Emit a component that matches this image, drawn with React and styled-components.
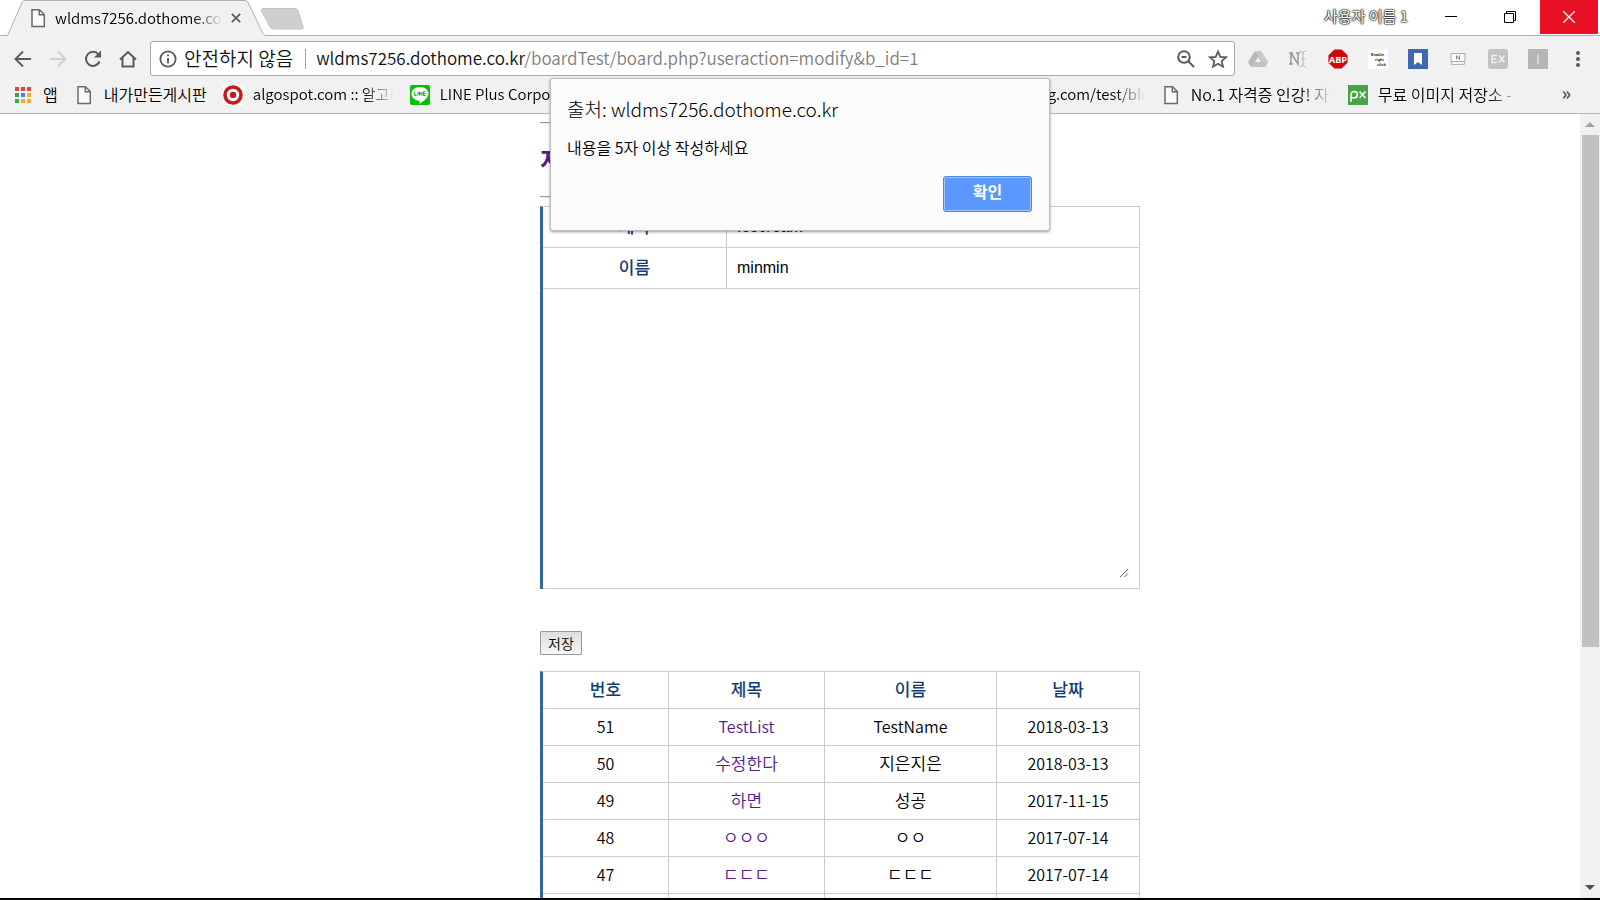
import React from 'react';
import styled, { createGlobalStyle, css } from 'styled-components';

const uiFont = '"Noto Sans CJK KR", "Noto Sans", sans-serif';

const GlobalStyle = createGlobalStyle`
  * { box-sizing: border-box; }
  body { margin: 0; background: #fff; color: #000; font: 16px/24px ${uiFont}; overflow: hidden; }
  button, input, textarea { font: inherit; margin: 0; }
  a { color: inherit; text-decoration: none; }
`;

const Browser = styled.div`
  display: flex;
  flex-direction: column;
  height: 100vh;
  border-bottom: 2px solid #000;
  overflow: hidden;
  font-weight: 350;
`;

const Chrome = styled.header`
  position: relative;
  flex: none;
  background: #f1f1f1;
  border-bottom: 1px solid #b5b5b5;
`;

const TabStrip = styled.div`
  display: flex;
  height: 36px;
  background: #fff;
  border-bottom: 1px solid #b0b0b0;
`;

const Tab = styled.div`
  position: relative;
  z-index: 0;
  display: flex;
  align-items: center;
  width: 260px;
  height: 36px;
  margin-left: 6px;
  padding: 0 24px 0 22px;
  gap: 7px;
`;

const TabShape = styled.svg`
  position: absolute;
  inset: 0;
  z-index: -1;
`;

const fade = css`
  overflow: hidden;
  white-space: nowrap;
  mask-image: linear-gradient(to right, #000 calc(100% - 30px), transparent);
`;

const TabTitle = styled.span`
  flex: 1;
  font-size: 15px;
  line-height: 20px;
  ${fade}
`;

const IconButton = styled.button`
  display: flex;
  align-items: center;
  justify-content: center;
  flex: none;
  width: ${(p) => p.$w || 20}px;
  height: ${(p) => p.$h || 20}px;
  padding: 0;
  border: 0;
  background: ${(p) => p.$bg || 'transparent'};
  color: ${(p) => p.$color || '#5a5a5a'};
`;

const NewTab = styled.button`
  padding: 0;
  border: 0;
  background: none;
  height: 38px;
  margin-left: -6px;
  display: flex;
  align-items: center;
`;

const WindowControls = styled.div`
  display: flex;
  align-items: flex-start;
  margin-left: auto;
  padding-right: 2px;
`;

const Profile = styled.button`
  height: 32px;
  padding: 0 14px;
  border: 0;
  background: none;
  color: #fff;
  font-size: 15px;
  font-weight: 400;
  text-shadow: 0 0 2px #000, 0 0 2px #000, 0 0 1px #000;
`;

const Toolbar = styled.div`
  display: flex;
  align-items: center;
  height: 45px;
  padding: 5px 12px 5px 13px;
`;

const NavButtons = styled.div`
  display: flex;
  gap: 15px;
  padding-right: 12px;
`;

const AddressBar = styled.div`
  display: flex;
  flex: 1;
  align-items: center;
  height: 35px;
  padding: 0 6px 0 7px;
  border: 1px solid #a9a9a9;
  border-radius: 3px;
  background: #fff;
`;

const Security = styled.button`
  display: flex;
  align-items: center;
  gap: 7px;
  height: 20px;
  padding: 0 12px 0 1px;
  border: 0;
  border-right: 1px solid #a0a0a0;
  background: none;
  color: #111;
  font-size: 19px;
  line-height: 20px;
`;

const SecurityLabel = styled.span`
  padding-bottom: 2px;
`;

const Url = styled.div`
  flex: 1;
  padding: 0 0 2px 10px;
  font-size: 17px;
  color: #808080;
  white-space: nowrap;
`;

const Host = styled.span`
  color: #111;
`;

const AddressActions = styled.div`
  display: flex;
  gap: 12px;
`;

const Extensions = styled.div`
  display: flex;
  gap: 20px;
  padding-left: 13px;
`;

const Bookmarks = styled.nav`
  display: flex;
  align-items: center;
  height: 32px;
  padding: 0 29px 5px 13px;
  gap: 16px;
`;

const Bookmark = styled.a`
  display: flex;
  flex: none;
  align-items: center;
  gap: 10px;
  height: 26px;
  font-size: ${(p) => (p.$korean ? 16 : 15)}px;
`;

const BookmarkText = styled.span`
  padding-bottom: 2px;
  ${(p) => p.$clip && css`width: 141px; ${fade}`}
`;

const BookmarkGap = styled.div`
  flex: none;
  width: 361px;
`;

const More = styled.button`
  margin-left: auto;
  padding: 0 0 6px;
  border: 0;
  background: none;
  color: #5a5a5a;
  font-size: 18px;
  font-weight: 700;
`;

const Dialog = styled.section`
  position: absolute;
  z-index: 2;
  top: 78px;
  left: 50%;
  width: 500px;
  height: 153px;
  margin-left: -250px;
  padding: 17px 17px 17px 16px;
  display: flex;
  flex-direction: column;
  border: 1px solid #bdbdbd;
  border-radius: 3px;
  background: #fbfbfb;
  box-shadow: 0 1px 3px rgba(0, 0, 0, 0.4);
`;

const DialogTitle = styled.h2`
  margin: 0 0 13px;
  font-size: 19px;
  line-height: 26px;
  font-weight: 300;
`;

const DialogText = styled.p`
  margin: 0;
  font-size: 16px;
  line-height: 24px;
`;

const OkButton = styled.button`
  align-self: flex-end;
  width: 89px;
  height: 36px;
  margin-top: 17px;
  padding: 0 0 6px;
  border: 1px solid #4a85e8;
  border-radius: 3px;
  box-shadow: inset 0 0 0 1px #a5c5ff;
  background: #5a97ff;
  color: #fff;
  font-size: 16px;
  font-weight: 700;
`;

const Viewport = styled.div`
  display: flex;
  flex: 1;
  min-height: 0;
`;

const Page = styled.main`
  flex: 1;
  overflow: hidden;
`;

const Board = styled.div`
  width: 700px;
  margin: 0 auto;
  padding: 8px 0 0 100px;
`;

const Rule = styled.hr`
  width: 500px;
  height: 2px;
  margin: 0;
  border: 0;
  border-top: 1px solid #9a9a9a;
  border-bottom: 1px solid #eee;
`;

const BoardTitle = styled.h2`
  margin: 18px 0 20px;
  font-size: 24px;
  line-height: 34px;
  font-weight: 700;
  color: #551a8b;
`;

const Table = styled.table`
  width: 100%;
  table-layout: fixed;
  border-collapse: separate;
  border-spacing: 0;
  border-top: 1px solid #ccc;
  border-left: 3px solid #369;
`;

const EditTable = styled(Table)`
  margin-top: 8px;
`;

const cell = css`
  height: ${(p) => p.$h}px;
  padding: 0 0 2px;
  border-right: 1px solid #ccc;
  border-bottom: 1px solid #ccc;
  text-align: center;
`;

const Th = styled.th`
  ${cell}
  width: ${(p) => p.$w}px;
  color: #153d73;
  font-weight: 500;
  font-size: 17px;
`;

const Td = styled.td`
  ${cell}
  font-size: ${(p) => (p.$korean ? 17 : 16)}px;
`;

const FieldCell = styled(Td)`
  padding: 0;
`;

const PostLink = styled.a`
  color: #551a8b;
`;

const Field = styled.input`
  display: block;
  width: 100%;
  height: 38px;
  padding: 0 10px;
  border: 0;
  outline: 0;
  background: transparent;
  font-family: "Liberation Sans", Arial, sans-serif;
`;

const BodyArea = styled.div`
  position: relative;
`;

const BodyField = styled.textarea`
  display: block;
  width: 100%;
  height: 299px;
  padding: 9px;
  border: 0;
  outline: 0;
  resize: none;
`;

const Grip = styled.svg`
  position: absolute;
  right: 10px;
  bottom: 10px;
`;

const SaveRow = styled.div`
  padding: 42px 0 16px;
`;

const SaveButton = styled.button`
  display: block;
  width: 42px;
  height: 24px;
  padding: 0;
  border: 1px solid #999;
  border-radius: 1px;
  background: linear-gradient(#dedede, #f6f6f6);
  font-size: 14px;
  line-height: 20px;
`;

const Scrollbar = styled.div`
  display: flex;
  flex-direction: column;
  align-items: center;
  flex: none;
  width: 20px;
  background: #f1f1f1;
`;

const ScrollArrow = styled(IconButton)`
  height: 21px;
`;

const Track = styled.div`
  flex: 1;
  width: 17px;
`;

const Thumb = styled.div`
  height: 69%;
  background: #c1c1c1;
`;

const DocIcon = () => (
  <svg width="20" height="20" viewBox="0 0 20 20" fill="none" stroke="#6a6a6a" strokeWidth="1.5">
    <path d="M4 1.7h7.5l4.8 4.8v12H4z" fill="#fafafa" />
    <path d="M11.3 1.7v5h5" />
  </svg>
);

const AppsIcon = () => (
  <svg width="20" height="20" viewBox="0 0 20 20">
    {['#e2453c', '#e2453c', '#e2453c', '#35a853', '#3f86f4', '#f0b02a', '#35a853', '#f0b02a', '#f0b02a'].map((c, i) => (
      <rect key={i} x={2 + (i % 3) * 6} y={2 + Math.floor(i / 3) * 6} width="4" height="4" fill={c} />
    ))}
  </svg>
);

const TargetIcon = () => (
  <svg width="20" height="20" viewBox="0 0 20 20">
    <rect width="20" height="20" fill="#fff" />
    <circle cx="10" cy="10" r="8" fill="#fff" stroke="#c41a20" strokeWidth="3.6" />
    <circle cx="10" cy="10" r="3.2" fill="#c41a20" />
  </svg>
);

const LineIcon = () => (
  <svg width="20" height="20" viewBox="0 0 20 20">
    <rect width="20" height="20" rx="2" fill="#00c300" />
    <path d="M10 2c4.800 0 8.500 2.800 8.500 6.700 0 3.800-4.500 6.800-8.300 9.800-.6.400-.7-.2-.6-1.100l.1-1.600C5 15.600 1.500 12.600 1.500 8.700 1.500 4.800 5.200 2 10 2z" fill="#fff" />
    <path d="M4.700 6.800v3.700h2M8 6.800v3.700M9.500 10.500V6.800l2.400 3.700V6.800M15.500 6.800h-2v3.700h2M13.500 8.600h1.800" fill="none" stroke="#00b300" strokeWidth="1" />
  </svg>
);

const PxIcon = () => (
  <svg width="20" height="20" viewBox="0 0 20 20">
    <rect width="20" height="20" fill="#48a547" />
    <path d="M3 17V9.500a3.200 3.200 0 1 1 3.200 3.300H3M11.500 6.500l6 6.500M17.500 6.500l-6 6.500" fill="none" stroke="#fff" strokeWidth="1.500" />
  </svg>
);

const Stroke = ({ children, w = 20, sw = 2, color = 'currentColor' }) => (
  <svg width={w} height={w} viewBox="0 0 20 20" fill="none" stroke={color} strokeWidth={sw}>{children}</svg>
);

const posts = [
  ['51', 'TestList', 'TestName', '2018-03-13'],
  ['50', '수정한다', '지은지은', '2018-03-13'],
  ['49', '하면', '성공', '2017-11-15'],
  ['48', 'ㅇㅇㅇ', 'ㅇㅇ', '2017-07-14'],
  ['47', 'ㄷㄷㄷ', 'ㄷㄷㄷ', '2017-07-14'],
  ['', '', '', ''],
];

const isKorean = (s) => /[\u3131-\uD79D]/.test(s);

const columns = [['번호', 126], ['제목', 156], ['이름', 172], ['날짜', 143]];

const bookmarks = [
  { icon: <AppsIcon />, text: '앱', korean: true },
  { icon: <DocIcon />, text: '내가만든게시판', korean: true },
  { icon: <TargetIcon />, text: 'algospot.com :: 알고리즘', clip: true },
  { icon: <LineIcon />, text: 'LINE Plus Corporation', clip: true },
  { gap: true },
  { icon: <DocIcon />, text: 'myblog.com/test/blog', clip: true },
  { icon: <DocIcon />, text: 'No.1 자격증 인강! 자격', clip: true, korean: true },
  { icon: <PxIcon />, text: '무료 이미지 저장소 -', clip: true, korean: true },
];

export default function App() {
  return (
    <Browser>
      <GlobalStyle />
      <Chrome>
        <TabStrip>
          <Tab>
            <TabShape width="260" height="36" viewBox="0 0 260 36">
              <path d="M0 35.500h1.500L16 2.500Q17 .5 19 .5H239Q241 .5 242 2.500L257 33.500Q258 35.500 260 35.500V36H0z" fill="#f1f1f1" />
              <path d="M0 35.500h1.500L16 2.500Q17 .5 19 .5H239Q241 .5 242 2.500L257 33.500Q258 35.500 260 35.500" fill="none" stroke="#b0b0b0" />
            </TabShape>
            <DocIcon />
            <TabTitle>wldms7256.dothome.co.kr</TabTitle>
            <IconButton $w={12} aria-label="탭 닫기">
              <Stroke w={12} sw={2.8}><path d="M3 3l14 14M17 3L3 17" /></Stroke>
            </IconButton>
          </Tab>
          <NewTab aria-label="새 탭">
            <svg width="44" height="22" viewBox="0 0 44 22">
              <path d="M4 .5h31q2 0 3 2l5 16q1 2.500-2 2.500H13q-2 0-3-2L1.500 3q-1-2.500 2.500-2.500z" fill="#cfcfcf" stroke="#c2c2c2" />
            </svg>
          </NewTab>
          <WindowControls>
            <Profile>사용자 이름 1</Profile>
            <IconButton $w={58} $h={34} $color="#000" aria-label="최소화">
              <svg width="12" height="12"><path d="M0 5.500h12" stroke="#000" /></svg>
            </IconButton>
            <IconButton $w={60} $h={34} $color="#000" aria-label="이전 크기로">
              <svg width="12" height="12" fill="none" stroke="#000"><path d="M.5 2.500h9v9h-9zM2.500 2.500v-2h9v9h-2" /></svg>
            </IconButton>
            <IconButton $w={58} $h={34} $bg="#e81123" aria-label="닫기">
              <svg width="12" height="12"><path d="M0 0l12 12M12 0L0 12" stroke="#fff" strokeWidth="1.3" /></svg>
            </IconButton>
          </WindowControls>
        </TabStrip>
        <Toolbar>
          <NavButtons>
            <IconButton aria-label="뒤로"><Stroke><path d="M18 10H3M10 2.500L2.500 10l7.500 7.500" /></Stroke></IconButton>
            <IconButton $color="#d0d0d0" aria-label="앞으로"><Stroke><path d="M2 10h15M10 2.500l7.500 7.500-7.500 7.500" /></Stroke></IconButton>
            <IconButton aria-label="새로고침">
              <Stroke><path d="M16.500 12.500A7 7 0 1 1 15.500 5.500" /><path d="M18 1.500v7h-7z" fill="currentColor" stroke="none" /></Stroke>
            </IconButton>
            <IconButton aria-label="홈"><Stroke><path d="M2 10.500L10 3l8 7.500M4.500 9v8.500h11V9" /></Stroke></IconButton>
          </NavButtons>
          <AddressBar>
            <Security>
              <Stroke w={18} color="#5a5a5a"><circle cx="10" cy="10" r="8.500" /><path d="M10 9v6M10 5v2" /></Stroke>
              <SecurityLabel>안전하지 않음</SecurityLabel>
            </Security>
            <Url><Host>wldms7256.dothome.co.kr</Host>/boardTest/board.php?useraction=modify&amp;b_id=1</Url>
            <AddressActions>
              <IconButton aria-label="축소"><Stroke><circle cx="8" cy="8" r="5.800" /><path d="M12.500 12.500L18 18M5.500 8h5" /></Stroke></IconButton>
              <IconButton aria-label="북마크">
                <Stroke sw={1.8}><path d="M10 2.500l2.300 5.300 5.700.5-4.300 3.800 1.300 5.600-5-3-5 3 1.300-5.600L2 8.300l5.700-.5z" /></Stroke>
              </IconButton>
            </AddressActions>
          </AddressBar>
          <Extensions>
            <IconButton aria-label="드라이브">
              <svg width="20" height="20"><path d="M7 2h6l7 11-3 5H3l-3-5z" fill="#b8b8b8" /><path d="M7 2h6l7 11h-6z" fill="#cacaca" /><path d="M3 18l3-5h14l-3 5z" fill="#c2c2c2" /><path d="M10 8l3 5H7z" fill="#f1f1f1" /></svg>
            </IconButton>
            <IconButton aria-label="N">
              <svg width="20" height="20" fill="none"><path d="M1 4h4M3 4v11M1 15h4M3 4l7 11V4M8 4h4" stroke="#999" strokeWidth="1.500" /><path d="M12 2q2 0 3 2 1-2 3-2M15 4v12M12 18q2 0 3-2 1 2 3 2M13 10h4" stroke="#b5b5b5" /></svg>
            </IconButton>
            <IconButton aria-label="ABP">
              <svg width="22" height="22" viewBox="0 0 22 22"><path d="M7 .5h8l6.500 6.500v8L15 21.500H7L.5 15V7z" fill="#cf0808" /><text x="11" y="15" textAnchor="middle" fontFamily="Open Sans, sans-serif" fontSize="10" fontWeight="700" fill="#fff">ABP</text></svg>
            </IconButton>
            <IconButton aria-label="오른쪽 클릭 허용">
              <svg width="20" height="20" fontFamily="Liberation Sans, sans-serif" fontSize="4" fontWeight="700" fill="#222"><rect width="20" height="20" fill="#fff" /><text x="3" y="6.500">Enable</text><text x="7" y="12">right</text><text x="9" y="17">click</text></svg>
            </IconButton>
            <IconButton aria-label="책갈피">
              <svg width="20" height="20"><rect width="20" height="20" fill="#4267b2" /><path d="M6 4h8v12l-4-3-4 3z" fill="#fff" /></svg>
            </IconButton>
            <IconButton aria-label="노트">
              <svg width="20" height="20" fill="none"><path d="M3 4.500h14v8H3z" fill="#fafafa" stroke="#aaa" /><path d="M3.500 13v2.500h13V13" stroke="#b5b5b5" /><path d="M8.500 10.500v-4l3 4v-4" stroke="#888" /></svg>
            </IconButton>
            <IconButton aria-label="EX">
              <svg width="20" height="20" fill="none"><rect width="20" height="20" rx="3" fill="#c2c2c2" /><path d="M9 6.500H4v7h5M4 10h4.500M11 6.500l5.500 7M16.500 6.500l-5.500 7" stroke="#f0f0f0" strokeWidth="1.500" /></svg>
            </IconButton>
            <IconButton aria-label="I">
              <svg width="20" height="20"><rect width="20" height="20" fill="#b5b5b5" /><path d="M10 5v10" stroke="#dedede" strokeWidth="1.500" /></svg>
            </IconButton>
            <IconButton aria-label="메뉴">
              <svg width="20" height="20" fill="#5a5a5a"><circle cx="10" cy="4" r="2" /><circle cx="10" cy="10" r="2" /><circle cx="10" cy="16" r="2" /></svg>
            </IconButton>
          </Extensions>
        </Toolbar>
        <Bookmarks>
          {bookmarks.map((b, i) => b.gap ? <BookmarkGap key={i} /> : (
            <Bookmark key={i} href="#" $korean={b.korean}>{b.icon}<BookmarkText $clip={b.clip}>{b.text}</BookmarkText></Bookmark>
          ))}
          <More>»</More>
        </Bookmarks>
        <Dialog role="alertdialog" aria-labelledby="origin">
          <DialogTitle id="origin">출처: wldms7256.dothome.co.kr</DialogTitle>
          <DialogText>내용을 5자 이상 작성하세요</DialogText>
          <OkButton>확인</OkButton>
        </Dialog>
      </Chrome>
      <Viewport>
        <Page>
          <Board>
            <Rule />
            <BoardTitle><a href="#">지은</a></BoardTitle>
            <Rule />
            <EditTable>
              <tbody>
                <tr>
                  <Th $h={41} $w={184} scope="row"><label htmlFor="title">제목</label></Th>
                  <FieldCell><Field id="title" defaultValue="Icecream" /></FieldCell>
                </tr>
                <tr>
                  <Th $h={41} scope="row"><label htmlFor="name">이름</label></Th>
                  <FieldCell><Field id="name" defaultValue="minmin" /></FieldCell>
                </tr>
                <tr>
                  <FieldCell colSpan={2} $h={300}>
                    <BodyArea>
                      <BodyField aria-label="내용" />
                      <Grip width="10" height="10" stroke="#666"><path d="M1 9L9 1M5.500 9L9 5.500" /></Grip>
                    </BodyArea>
                  </FieldCell>
                </tr>
              </tbody>
            </EditTable>
            <SaveRow><SaveButton>저장</SaveButton></SaveRow>
            <Table>
              <thead>
                <tr>{columns.map(([name, w]) => <Th key={name} $h={37} $w={w} scope="col">{name}</Th>)}</tr>
              </thead>
              <tbody>
                {posts.map(([no, title, name, date], i) => (
                  <tr key={i}>
                    <Td $h={37}>{no}</Td>
                    <Td $h={37} $korean={isKorean(title)}><PostLink href="#">{title}</PostLink></Td>
                    <Td $h={37} $korean={isKorean(name)}>{name}</Td>
                    <Td $h={37}>{date}</Td>
                  </tr>
                ))}
              </tbody>
            </Table>
          </Board>
        </Page>
        <Scrollbar>
          <ScrollArrow aria-label="위로"><svg width="10" height="5"><path d="M0 5l5-5 5 5z" fill="#a3a3a3" /></svg></ScrollArrow>
          <Track><Thumb /></Track>
          <ScrollArrow aria-label="아래로"><svg width="10" height="5"><path d="M0 0l5 5 5-5z" fill="#505050" /></svg></ScrollArrow>
        </Scrollbar>
      </Viewport>
    </Browser>
  );
}
